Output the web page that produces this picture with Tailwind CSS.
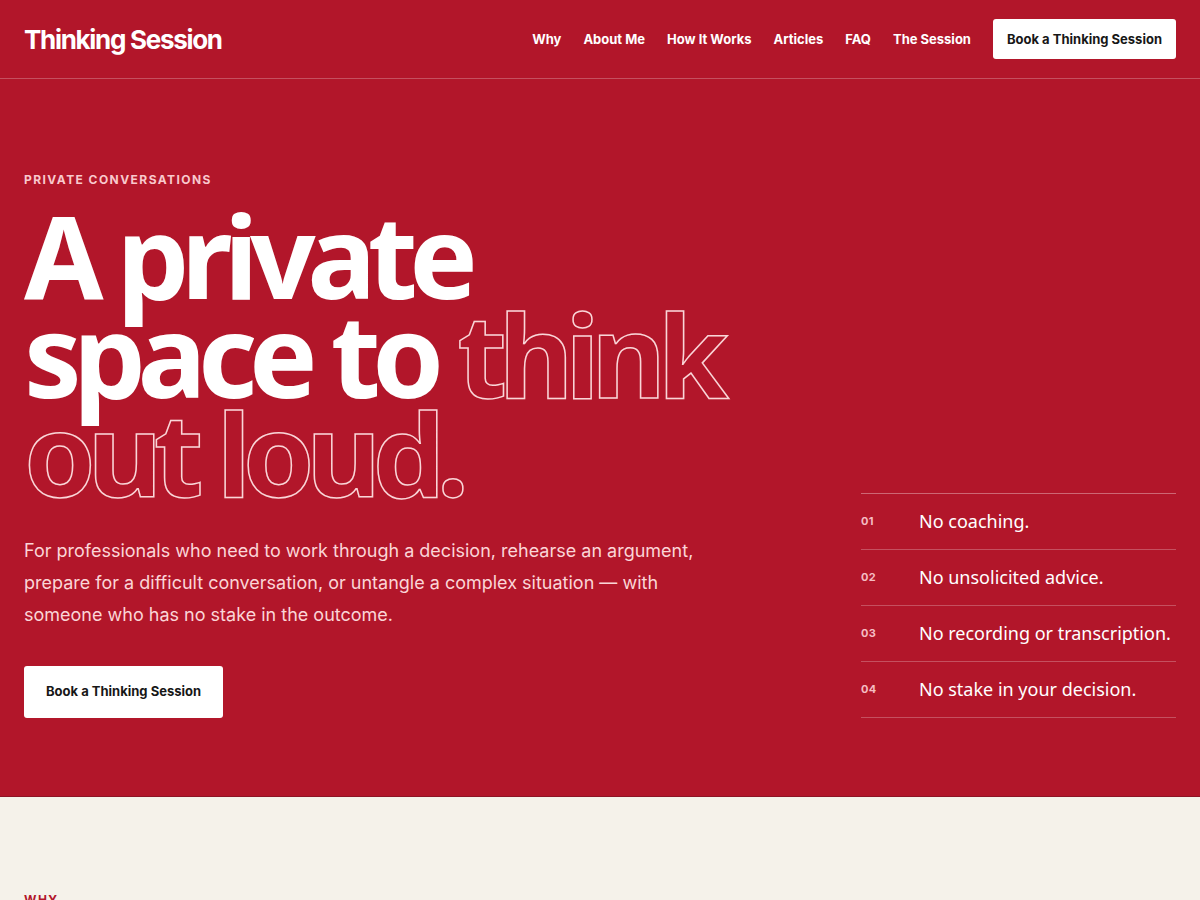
<!DOCTYPE html>
<html lang="en">
<head>
<meta charset="utf-8">
<meta name="viewport" content="width=device-width, initial-scale=1">
<title>Thinking Session</title>
<script src="https://cdn.jsdelivr.net/npm/@tailwindcss/browser@4"></script>
</head>
<body class="bg-[#f5f2ea] font-['Inter',sans-serif] text-[#171717]">
<header class="border-b border-white/25 bg-[#b2162a] text-white">
  <div class="flex h-[78px] items-center justify-between px-6">
    <a href="#" class="text-[26px] font-bold tracking-tighter">Thinking Session</a>
    <nav class="flex items-center gap-[22px] text-[13px] leading-[22px] font-bold whitespace-nowrap">
      <a href="#why">Why</a>
      <a href="#about">About Me</a>
      <a href="#how">How It Works</a>
      <a href="#articles">Articles</a>
      <a href="#faq">FAQ</a>
      <a href="#session">The Session</a>
      <a href="#book" class="rounded-[3px] bg-white px-[14px] py-[9px] text-[#171717]">Book a Thinking Session</a>
    </nav>
  </div>
</header>
<main>
  <section class="flex items-end justify-between gap-16 border-b border-[#8d1425] bg-[#b2162a] px-6 pt-[92px] pb-[78px] text-white">
    <div class="max-w-[760px]">
      <p class="text-[12px] leading-[18px] font-bold tracking-[0.12em] text-[#f9c9cd] uppercase">Private conversations</p>
      <h1 class="mt-4 font-['Noto_Sans',sans-serif] text-[115px] leading-[99px] font-bold tracking-[-0.073em]">A private<br>space to <span class="text-transparent [-webkit-text-stroke:1.5px_#fad6d8]">think<br>out loud.</span></h1>
      <p class="mt-[33px] max-w-[690px] text-[18px] leading-8 text-[#fbd5d7]">For professionals who need to work through a decision, rehearse an argument, prepare for a difficult conversation, or untangle a complex situation — with someone who has no stake in the outcome.</p>
      <a href="#book" class="mt-[35px] inline-flex h-[52px] items-center rounded-[3px] bg-white px-[22px] text-[13px] font-bold text-[#171717]">Book a Thinking Session</a>
    </div>
    <ol class="w-[315px] shrink-0 border-t border-white/35">
      <li class="flex h-14 items-center border-b border-white/25"><span class="w-[58px] text-[11px] font-bold tracking-wide text-[#f5bcc2]">01</span><span class="font-['Noto_Sans',sans-serif] text-[18px] whitespace-nowrap">No coaching.</span></li>
      <li class="flex h-14 items-center border-b border-white/25"><span class="w-[58px] text-[11px] font-bold tracking-wide text-[#f5bcc2]">02</span><span class="font-['Noto_Sans',sans-serif] text-[18px] whitespace-nowrap">No unsolicited advice.</span></li>
      <li class="flex h-14 items-center border-b border-white/25"><span class="w-[58px] text-[11px] font-bold tracking-wide text-[#f5bcc2]">03</span><span class="font-['Noto_Sans',sans-serif] text-[18px] whitespace-nowrap">No recording or transcription.</span></li>
      <li class="flex h-14 items-center border-b border-white/25"><span class="w-[58px] text-[11px] font-bold tracking-wide text-[#f5bcc2]">04</span><span class="font-['Noto_Sans',sans-serif] text-[18px] whitespace-nowrap">No stake in your decision.</span></li>
    </ol>
  </section>
  <section id="why" class="px-6 pt-[94px]">
    <p class="text-[12px] leading-[18px] font-bold tracking-[0.12em] text-[#b2162a] uppercase">Why</p>
  </section>
</main>
</body>
</html>
